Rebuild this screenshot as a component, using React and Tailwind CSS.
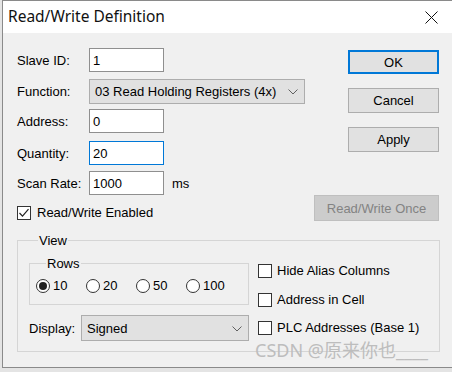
import React from "react";

const Chevron = () => (
  <svg width="10" height="6" viewBox="0 0 10 6" className="shrink-0">
    <path d="M0.5 0.5 L5 5 L9.5 0.5" fill="none" stroke="#606060" strokeWidth="1" />
  </svg>
);

const Check = ({ checked }) => (
  <div className="w-[14px] h-[14px] border border-[#333333] bg-white flex items-center justify-center shrink-0">
    {checked && (
      <svg width="12" height="12" viewBox="0 0 12 12">
        <path d="M1.5 6 L4.5 9.2 L10.5 2.2" fill="none" stroke="#222" strokeWidth="1.2" />
      </svg>
    )}
  </div>
);

const Radio = ({ checked, label }) => (
  <div className="w-[50px] flex items-center gap-[3px]">
    <div className="w-[14px] h-[14px] rounded-full border border-[#333333] bg-white flex items-center justify-center shrink-0">
      {checked && <div className="w-[8px] h-[8px] rounded-full bg-[#222222]" />}
    </div>
    <span>{label}</span>
  </div>
);

const Field = ({ label, value, focused, className = "" }) => (
  <div className={"flex items-center " + className}>
    <div className="w-[72px] pt-[1px]">{label}</div>
    <div
      className={
        "w-[75px] h-full bg-white border flex items-center pl-[3px] pt-[1px] " +
        (focused ? "border-[#0078d7]" : "border-[#8f8f8f]")
      }
    >
      {value}
    </div>
  </div>
);

const Button = ({ children, className = "", primary, disabled }) => (
  <div
    className={
      "flex items-center justify-center pt-[1px] " +
      (disabled
        ? "bg-[#cccccc] border border-[#bfbfbf] text-[#838383] "
        : primary
        ? "bg-[#e1e1e1] border-2 border-[#0078d7] "
        : "bg-[#e1e1e1] border border-[#adadad] ") +
      className
    }
  >
    {children}
  </div>
);

export default function App() {
  return (
    <div
      className="w-[452px] h-[372px] bg-[#e4e4e4] overflow-hidden relative text-[13px] text-black"
      style={{ fontFamily: '"Liberation Sans", Arial, sans-serif' }}
    >
      <div className="ml-[2px] w-[450px] h-[368px] border-t border-l border-b border-[#8a8a8a] bg-[#f0f0f0] flex flex-col">
        {/* Title bar */}
        <div className="h-[32px] bg-white flex items-center pl-[5px] pr-[14px] shrink-0">
          <span
            className="text-[15.5px] text-[#111]"
            style={{ fontFamily: '"Noto Sans", "Open Sans", sans-serif' }}
          >
            Read/Write Definition
          </span>
          <svg width="13" height="13" viewBox="0 0 13 13" className="ml-auto">
            <path d="M0.5 0.5 L12.5 12.5 M12.5 0.5 L0.5 12.5" stroke="#111" strokeWidth="1" />
          </svg>
        </div>

        {/* Body */}
        <div className="flex-1 pl-[14px] pr-[13px] pt-[15px]">
          <div className="flex">
            <div className="w-[288px] flex flex-col">
              <Field label="Slave ID:" value="1" className="h-[24px]" />
              <div className="flex items-center h-[25px] mt-[7px]">
                <div className="w-[72px] pt-[1px]">Function:</div>
                <div className="w-[216px] h-full bg-[#e1e1e1] border border-[#adadad] flex items-center pl-[5px] pr-[6px] pt-[1px]">
                  <span>03 Read Holding Registers (4x)</span>
                  <span className="ml-auto">
                    <Chevron />
                  </span>
                </div>
              </div>
              <Field label="Address:" value="0" className="h-[24px] mt-[5px]" />
              <Field label="Quantity:" value="20" focused className="h-[24px] mt-[8px]" />
              <div className="flex items-center h-[24px] mt-[6px]">
                <Field label="Scan Rate:" value="1000" className="h-full" />
                <span className="ml-[8px] pt-[1px]">ms</span>
              </div>
              <div className="flex items-center gap-[6px] h-[16px] mt-[10px]">
                <Check checked />
                <span>Read/Write Enabled</span>
              </div>
            </div>

            <div className="ml-auto w-[125px] flex flex-col items-end">
              <Button primary className="mt-[2px] h-[24px] w-[91px]">OK</Button>
              <Button className="mt-[14px] h-[25px] w-[91px]">Cancel</Button>
              <Button className="mt-[14px] h-[25px] w-[91px]">Apply</Button>
              <Button disabled className="mt-[43px] h-[26px] w-[125px]">Read/Write Once</Button>
            </div>
          </div>

          {/* View group */}
          <fieldset className="mt-[12px] w-[423px] h-[119px] border border-[#d5d5d5] pl-[11px] pr-[6px]">
            <legend className="ml-[9px] px-[1px] leading-[15px]">View</legend>
            <div className="flex mt-[8px]">
              <div className="w-[220px] flex flex-col">
                <fieldset className="h-[49px] border border-[#d5d5d5] pl-[6px]">
                  <legend className="ml-[10px] px-[1px] leading-[15px]">Rows</legend>
                  <div className="flex items-center h-[20px] mt-[5px]">
                    <Radio checked label="10" />
                    <Radio label="20" />
                    <Radio label="50" />
                    <Radio label="100" />
                  </div>
                </fieldset>
                <div className="flex items-center h-[26px] mt-[10px]">
                  <div className="w-[52px] pt-[1px]">Display:</div>
                  <div className="flex-1 h-full bg-[#e1e1e1] border border-[#adadad] flex items-center pl-[5px] pr-[6px] pt-[1px]">
                    <span>Signed</span>
                    <span className="ml-auto">
                      <Chevron />
                    </span>
                  </div>
                </div>
              </div>
              <div className="ml-[9px] flex flex-col pt-[7px]">
                <div className="flex items-center gap-[5px] h-[15px]">
                  <Check />
                  <span>Hide Alias Columns</span>
                </div>
                <div className="flex items-center gap-[5px] h-[15px] mt-[14px]">
                  <Check />
                  <span>Address in Cell</span>
                </div>
                <div className="flex items-center gap-[5px] h-[15px] mt-[13px]">
                  <Check />
                  <span>PLC Addresses (Base 1)</span>
                </div>
              </div>
            </div>
          </fieldset>
        </div>
      </div>

      {/* Watermark */}
      <div
        className="absolute left-[255px] top-[339px] text-[18px] leading-[22px] text-[#bdbdbd] whitespace-nowrap"
        style={{ fontFamily: '"Noto Sans", "Noto Sans CJK SC", sans-serif' }}
      >
        CSDN @原来你也____
      </div>
    </div>
  );
}
